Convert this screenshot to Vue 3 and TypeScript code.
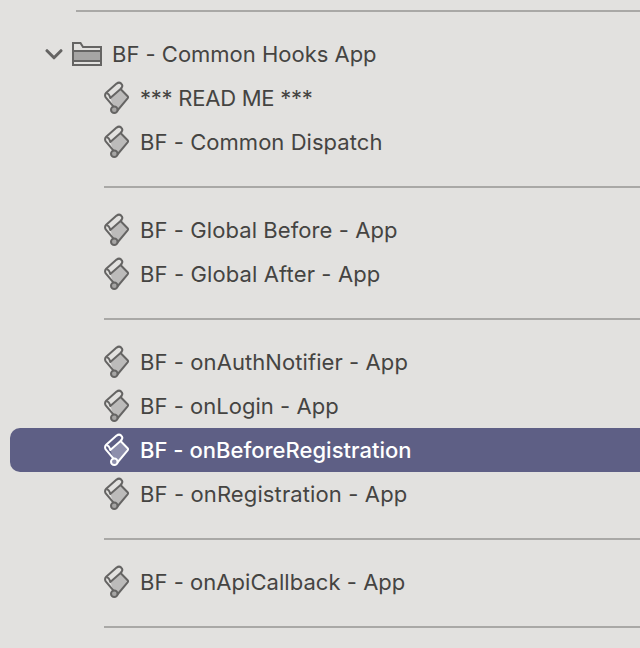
<script setup lang="ts">
interface Entry {
  kind: 'folder' | 'script' | 'divider'
  label?: string
  selected?: boolean
  outer?: boolean
  tracking?: number
}

const entries: Entry[] = [
  { kind: 'divider', outer: true },
  { kind: 'folder', label: 'BF - Common Hooks App', tracking: -0.01 },
  { kind: 'script', label: '*** READ ME ***', tracking: -0.24 },
  { kind: 'script', label: 'BF - Common Dispatch', tracking: 0.05 },
  { kind: 'divider' },
  { kind: 'script', label: 'BF - Global Before - App' },
  { kind: 'script', label: 'BF - Global After - App', tracking: 0.12 },
  { kind: 'divider' },
  { kind: 'script', label: 'BF - onAuthNotifier - App' },
  { kind: 'script', label: 'BF - onLogin - App', tracking: 0.03 },
  { kind: 'script', label: 'BF - onBeforeRegistration', selected: true, tracking: 0.02 },
  { kind: 'script', label: 'BF - onRegistration - App', tracking: 0.12 },
  { kind: 'divider' },
  { kind: 'script', label: 'BF - onApiCallback - App', tracking: 0.04 },
  { kind: 'divider' },
]

const spacing = (entry: Entry) => ({ letterSpacing: `${entry.tracking ?? 0.08}px` })
</script>

<template>
  <main class="sidebar">
    <div
      v-for="(entry, i) in entries"
      :key="i"
      class="row"
      :class="[entry.kind, { selected: entry.selected, outer: entry.outer }]"
    >
      <hr v-if="entry.kind === 'divider'" />
      <template v-else-if="entry.kind === 'folder'">
        <svg class="chevron" width="18" height="12" viewBox="0 0 18 12">
          <path d="M2 2.7 9 9.8 16 2.7" />
        </svg>
        <svg class="folder-icon" width="30" height="24" viewBox="0 0 30 24">
          <path class="fill" d="M1 9h28v10H1z" />
          <path d="M1 23V1h7.5l2.5 4H29v18zM1 9h28M1 19h28" />
        </svg>
        <span :style="spacing(entry)">{{ entry.label }}</span>
      </template>
      <template v-else>
        <svg class="scroll-icon" width="26" height="34" viewBox="0 0 26 34">
          <path class="fill" d="M6.5 17 16.8 8.7 24 16.2 13.6 28 9 25z" />
          <circle class="fill" cx="10.3" cy="28.8" r="3.3" />
          <path d="M9.3 25.4 1.7 16.4Q0.2 13.8 2.2 11.8L12.6 2.6Q15 0.8 17 2.4 19.2 4.4 17.8 6.4L16.8 8.2 23.6 15.2Q24.5 16.2 23.6 17.4L13.4 29.5" />
          <path d="M2.4 12.2Q5.2 12.4 6.3 17L16 8.6 17.4 7" />
          <circle cx="10.3" cy="28.8" r="3.3" />
        </svg>
        <span :style="spacing(entry)">{{ entry.label }}</span>
      </template>
    </div>
  </main>
</template>

<style>
body {
  margin: 0;
  background: #e2e1df;
}
</style>

<style scoped>
.sidebar {
  box-sizing: border-box;
  height: 648px;
  overflow: hidden;
  background: #e2e1df;
  color: #454442;
  font: 400 22px/44px Inter, "Liberation Sans", sans-serif;
}
.row {
  box-sizing: border-box;
  display: flex;
  align-items: center;
  height: 44px;
  padding-left: 104px;
  white-space: pre;
}
.row.outer {
  height: 32px;
  padding-left: 76px;
  align-items: flex-start;
}
.row.outer hr {
  margin-top: 10px;
}
hr {
  flex: 1;
  height: 2px;
  margin: 2px 0 0;
  border: 0;
  background: #a9a8a6;
}
.row.folder {
  padding-left: 45px;
}
svg {
  flex: none;
  fill: none;
  stroke: #656463;
  stroke-width: 2;
  stroke-linejoin: round;
}
.chevron {
  margin-right: 9px;
  stroke-width: 3;
  stroke-linecap: round;
}
.folder-icon {
  margin-right: 10px;
  stroke-linejoin: miter;
}
.scroll-icon {
  margin-right: 10px;
}
.fill {
  fill: #bcbbba;
  stroke: none;
}
.folder-icon .fill {
  fill: #a6a5a4;
}
.scroll-icon circle.fill {
  fill: #a6a5a4;
}
.row.selected {
  margin-left: 10px;
  padding-left: 94px;
  border-radius: 10px 0 0 10px;
  background: #5e5f85;
  color: #fff;
  font-weight: 500;
}
.selected svg {
  stroke: #fff;
}
.selected .scroll-icon .fill {
  fill: #8e8fac;
}
</style>
